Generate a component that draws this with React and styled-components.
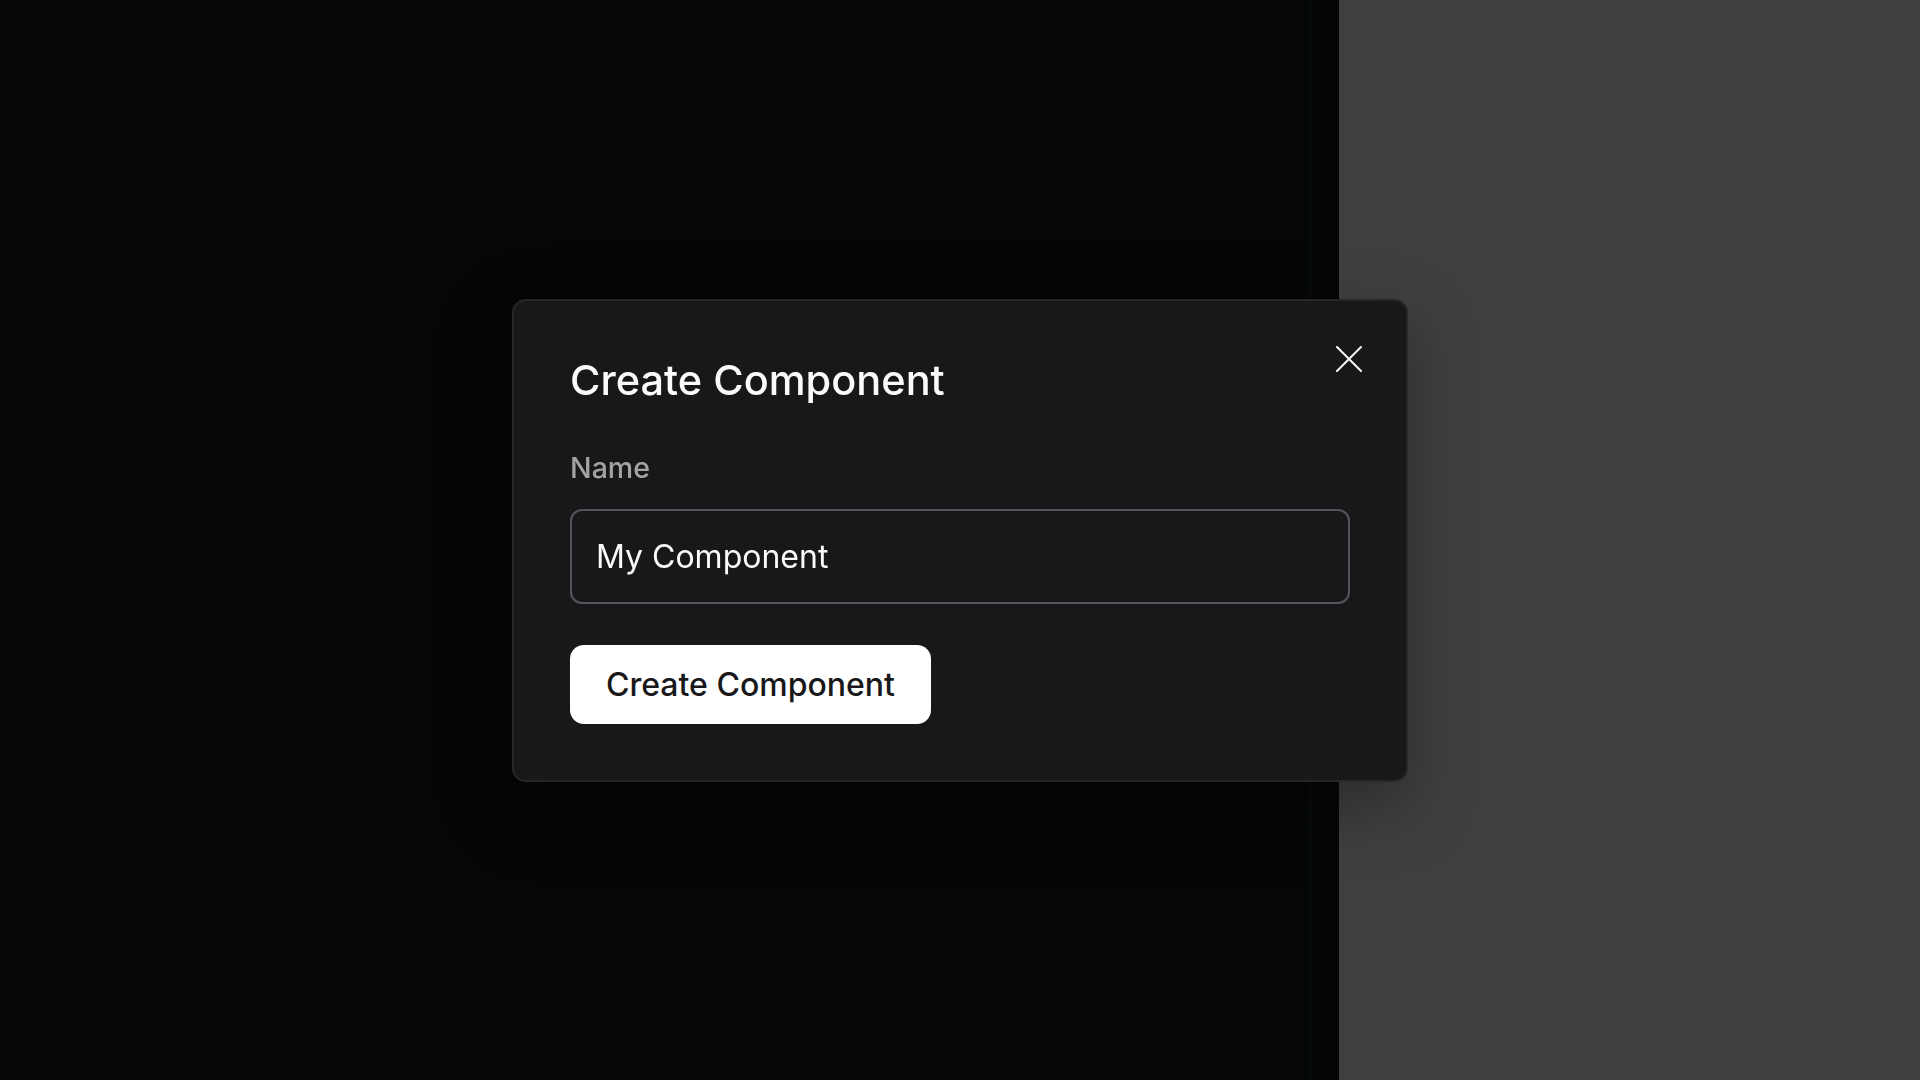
import React, { useState } from "react";
import styled, { createGlobalStyle } from "styled-components";

const GlobalStyle = createGlobalStyle`
  html, body {
    margin: 0;
    padding: 0;
    width: 100%;
    height: 100%;
    background: #050707;
    font-family: Inter, "Noto Sans", sans-serif;
    overflow: hidden;
  }
  * {
    box-sizing: border-box;
  }
`;

const Page = styled.div`
  display: flex;
  width: 100vw;
  height: 100vh;
`;

const Workspace = styled.div`
  width: 1311px;
  background: #050707;
  border-right: 1px solid #0f1212;
`;

const Gutter = styled.div`
  width: 28px;
  background: #040606;
`;

const SidePanel = styled.div`
  flex: 1;
  background: #404040;
`;

const Overlay = styled.div`
  position: fixed;
  inset: 0;
  display: flex;
  align-items: center;
  justify-content: center;
`;

const Dialog = styled.div`
  position: relative;
  width: 896px;
  padding: 56px;
  background: #18181b;
  border: 2px solid #27272a;
  border-radius: 14px;
  box-shadow: 0 24px 70px rgba(0, 0, 0, 0.35);
  display: flex;
  flex-direction: column;
`;

const Title = styled.h2`
  margin: 0 0 44px;
  font-size: 41.5px;
  line-height: 46px;
  font-weight: 500;
  color: #fafafa;
`;

const Label = styled.label`
  display: block;
  margin-bottom: 20px;
  font-size: 28.6px;
  line-height: 42px;
  font-weight: 500;
  color: #a3a3a3;
`;

const Input = styled.input`
  width: 100%;
  height: 95px;
  padding: 0 24px;
  margin-bottom: 41px;
  background: transparent;
  border: 2px solid #55555a;
  border-radius: 12px;
  font-family: inherit;
  font-size: 32px;
  color: #fafafa;
  outline: none;
`;

const SubmitButton = styled.button`
  align-self: flex-start;
  height: 79px;
  padding: 0 36px;
  background: #ffffff;
  border: none;
  border-radius: 14px;
  font-family: inherit;
  font-size: 32px;
  font-weight: 500;
  color: #18181b;
  cursor: pointer;
`;

const CloseButton = styled.button`
  position: absolute;
  top: 45px;
  right: 44px;
  width: 26px;
  height: 26px;
  padding: 0;
  background: none;
  border: none;
  color: #fafafa;
  cursor: pointer;
  display: flex;
`;

const App = () => {
  const [name, setName] = useState("My Component");

  return (
    <>
      <GlobalStyle />
      <Page>
        <Workspace />
        <Gutter />
        <SidePanel />
      </Page>
      <Overlay>
        <Dialog role="dialog">
          <Title>Create Component</Title>
          <Label htmlFor="component-name">Name</Label>
          <Input
            id="component-name"
            value={name}
            onChange={(e) => setName(e.target.value)}
          />
          <SubmitButton>Create Component</SubmitButton>
          <CloseButton aria-label="Close">
            <svg width="26" height="26" viewBox="0 0 26 26" fill="none">
              <path
                d="M1 1L25 25M25 1L1 25"
                stroke="currentColor"
                strokeWidth="2"
                strokeLinecap="round"
              />
            </svg>
          </CloseButton>
        </Dialog>
      </Overlay>
    </>
  );
};

export default App;
